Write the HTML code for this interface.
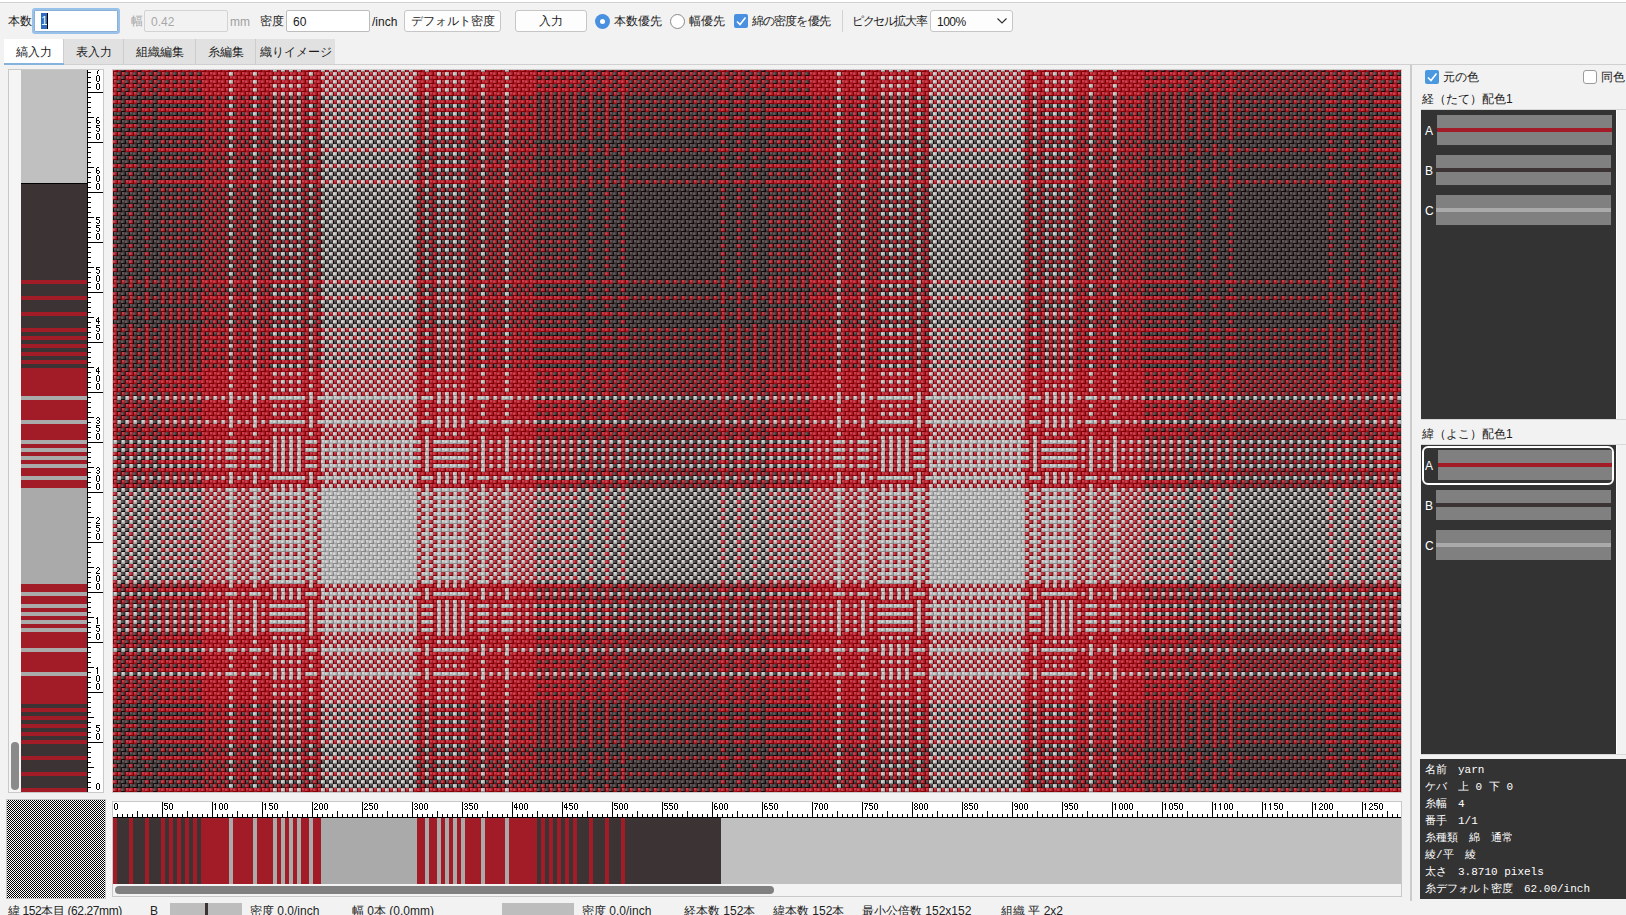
<!DOCTYPE html>
<html><head><meta charset="utf-8">
<style>
*{box-sizing:border-box;margin:0;padding:0}
html,body{width:1626px;height:915px;overflow:hidden;background:#f2f2f2;font-family:"Liberation Sans",sans-serif;font-size:12px;color:#1a1a1a}
.a{position:absolute}
.lbl{position:absolute;font-size:12px;line-height:14px;white-space:nowrap}
.inp{position:absolute;background:#fff;border:1px solid #bdbdbd;border-radius:2px}
.btn{position:absolute;background:#fdfdfd;border:1px solid #c6c6c6;border-radius:3px;text-align:center;font-size:12px;line-height:20px}
.tab{position:absolute;top:39px;height:25px;background:#e1e1e1;border-right:1px solid #cdcdcd;text-align:center;font-size:12px;line-height:27px}
.sw{position:absolute;left:1436px;width:175px;height:30px;background:#808080}
.sw i{position:absolute;left:0;right:0;top:13px;height:4px}
.swl{position:absolute;left:1425px;color:#fff;font-size:12px;line-height:14px}
.info{position:absolute;left:1425px;color:#fff;font-family:"Liberation Mono",monospace;font-size:11px;line-height:17px;white-space:pre}
.st{position:absolute;top:904px;font-size:12px;line-height:14px;white-space:nowrap;color:#222}
</style></head><body>
<!-- top line -->
<div class="a" style="left:0;top:0;width:1626px;height:2px;background:#fff"></div>
<div class="a" style="left:0;top:2px;width:1626px;height:1px;background:#d0d0d0"></div>
<div class="a" style="left:0;top:3px;width:1626px;height:1px;background:#f5f5f5"></div>

<!-- toolbar -->
<div class="lbl" style="left:8px;top:14px">本数</div>
<div class="inp" style="left:32px;top:8px;width:88px;height:26px;border:2px solid #98c2ea;box-shadow:inset 0 0 0 1px #8bb0d8;border-radius:3px"></div>
<div class="a" style="left:41px;top:13px;width:7px;height:16px;background:#2f6cc0"></div>
<div class="lbl" style="left:41px;top:14px;color:#dff;font-size:12px">1</div>
<div class="a" style="left:47px;top:13px;width:1px;height:16px;background:#000"></div>
<div class="lbl" style="left:131px;top:14px;color:#a6a6a6">幅</div>
<div class="inp" style="left:144px;top:10px;width:84px;height:22px;background:#f2f2f2;border-color:#d3d3d3"></div>
<div class="lbl" style="left:151px;top:15px;color:#a8a8a8">0.42</div>
<div class="lbl" style="left:230px;top:15px;color:#a0a0a0">mm</div>
<div class="lbl" style="left:260px;top:14px">密度</div>
<div class="inp" style="left:286px;top:10px;width:84px;height:22px"></div>
<div class="lbl" style="left:293px;top:15px">60</div>
<div class="lbl" style="left:372px;top:15px">/inch</div>
<div class="btn" style="left:404px;top:10px;width:97px;height:22px">デフォルト密度</div>
<div class="btn" style="left:515px;top:10px;width:72px;height:22px">入力</div>
<div class="a" style="left:595px;top:14px;width:15px;height:15px;border-radius:50%;background:#4a90e0"></div>
<div class="a" style="left:600px;top:19px;width:5px;height:5px;border-radius:50%;background:#fff"></div>
<div class="lbl" style="left:614px;top:14px">本数優先</div>
<div class="a" style="left:670px;top:14px;width:15px;height:15px;border-radius:50%;background:#fff;border:1px solid #8a8a8a"></div>
<div class="lbl" style="left:689px;top:14px">幅優先</div>
<div class="a" style="left:734px;top:14px;width:14px;height:14px;border-radius:2px;background:#4a90e0"></div>
<svg class="a" style="left:734px;top:14px" width="14" height="14"><path d="M3 7.5 L6 10.5 L11.5 3.5" stroke="#fff" stroke-width="1.6" fill="none"/></svg>
<div class="lbl" style="left:752px;top:14px;letter-spacing:-0.9px">綿の密度を優先</div>
<div class="a" style="left:842px;top:10px;width:1px;height:22px;background:#d2d2d2"></div>
<div class="lbl" style="left:852px;top:14px;letter-spacing:-1.4px">ピクセル拡大率</div>
<div class="btn" style="left:930px;top:10px;width:83px;height:22px;text-align:left"></div>
<div class="lbl" style="left:937px;top:15px;letter-spacing:-0.5px">100%</div>
<svg class="a" style="left:996px;top:16px" width="12" height="10"><path d="M1.5 2.5 L6 7 L10.5 2.5" stroke="#333" stroke-width="1.2" fill="none"/></svg>

<!-- tabs -->
<div class="tab" style="left:4px;width:60px;background:#fff">縞入力</div>
<div class="a" style="left:4px;top:63px;width:60px;height:2px;background:#86b2de;z-index:2"></div>
<div class="tab" style="left:64px;width:60px">表入力</div>
<div class="tab" style="left:124px;width:72px">組織編集</div>
<div class="tab" style="left:196px;width:60px">糸編集</div>
<div class="tab" style="left:256px;width:79px;border-right:none">織りイメージ</div>
<div class="a" style="left:4px;top:64px;width:1622px;height:1px;background:#d0d0d0"></div>

<!-- left weft panel -->
<div class="a" style="left:8px;top:69px;width:96px;height:724px;border:1px solid #c8c8c8;background:#f5f5f5"></div>
<div class="a" style="left:11px;top:742px;width:8px;height:48px;border-radius:4px;background:#8a8a8a"></div>
<div class="a" style="left:21px;top:70px;width:66px;height:722px;background:linear-gradient(to top,#a21c28 0px 4px,#3c3434 4px 16px,#a21c28 16px 20px,#3c3434 20px 32px,#a21c28 32px 36px,#3c3434 36px 48px,#a21c28 48px 52px,#3c3434 52px 56px,#a21c28 56px 60px,#3c3434 60px 64px,#a21c28 64px 68px,#3c3434 68px 72px,#a21c28 72px 76px,#3c3434 76px 80px,#a21c28 80px 84px,#3c3434 84px 88px,#a21c28 88px 116px,#aaaaaa 116px 120px,#a21c28 120px 140px,#aaaaaa 140px 144px,#a21c28 144px 160px,#aaaaaa 160px 164px,#a21c28 164px 168px,#aaaaaa 168px 172px,#a21c28 172px 176px,#aaaaaa 176px 180px,#a21c28 180px 184px,#aaaaaa 184px 188px,#a21c28 188px 196px,#aaaaaa 196px 200px,#a21c28 200px 208px,#aaaaaa 208px 304px,#a21c28 304px 312px,#aaaaaa 312px 316px,#a21c28 316px 324px,#aaaaaa 324px 328px,#a21c28 328px 332px,#aaaaaa 332px 336px,#a21c28 336px 340px,#aaaaaa 340px 344px,#a21c28 344px 348px,#aaaaaa 348px 352px,#a21c28 352px 368px,#aaaaaa 368px 372px,#a21c28 372px 392px,#aaaaaa 392px 396px,#a21c28 396px 424px,#3c3434 424px 428px,#a21c28 428px 432px,#3c3434 432px 436px,#a21c28 436px 440px,#3c3434 440px 444px,#a21c28 444px 448px,#3c3434 448px 452px,#a21c28 452px 456px,#3c3434 456px 460px,#a21c28 460px 464px,#3c3434 464px 476px,#a21c28 476px 480px,#3c3434 480px 492px,#a21c28 492px 496px,#3c3434 496px 508px,#a21c28 508px 512px,#3c3434 512px 608px) 0 100%/100% 608px no-repeat,#c0c0c0"></div>
<div class="a" style="left:87px;top:70px;width:16px;height:722px;background:#fff;border-left:1px solid #000"></div>
<canvas id="cw" class="a" style="left:21px;top:70px" width="82" height="722"></canvas>

<!-- fabric -->
<div class="a" style="left:112px;top:69px;width:1290px;height:724px;background:#cccccc"></div>
<div class="a" style="left:113px;top:70px;width:1288px;height:722px;background:linear-gradient(to right,rgba(167,26,39,.5) 0px 4px,rgba(60,52,52,.5) 4px 16px,rgba(167,26,39,.5) 16px 20px,rgba(60,52,52,.5) 20px 32px,rgba(167,26,39,.5) 32px 36px,rgba(60,52,52,.5) 36px 48px,rgba(167,26,39,.5) 48px 52px,rgba(60,52,52,.5) 52px 56px,rgba(167,26,39,.5) 56px 60px,rgba(60,52,52,.5) 60px 64px,rgba(167,26,39,.5) 64px 68px,rgba(60,52,52,.5) 68px 72px,rgba(167,26,39,.5) 72px 76px,rgba(60,52,52,.5) 76px 80px,rgba(167,26,39,.5) 80px 84px,rgba(60,52,52,.5) 84px 88px,rgba(167,26,39,.5) 88px 116px,rgba(175,175,175,.5) 116px 120px,rgba(167,26,39,.5) 120px 140px,rgba(175,175,175,.5) 140px 144px,rgba(167,26,39,.5) 144px 160px,rgba(175,175,175,.5) 160px 164px,rgba(167,26,39,.5) 164px 168px,rgba(175,175,175,.5) 168px 172px,rgba(167,26,39,.5) 172px 176px,rgba(175,175,175,.5) 176px 180px,rgba(167,26,39,.5) 180px 184px,rgba(175,175,175,.5) 184px 188px,rgba(167,26,39,.5) 188px 196px,rgba(175,175,175,.5) 196px 200px,rgba(167,26,39,.5) 200px 208px,rgba(175,175,175,.5) 208px 304px,rgba(167,26,39,.5) 304px 312px,rgba(175,175,175,.5) 312px 316px,rgba(167,26,39,.5) 316px 324px,rgba(175,175,175,.5) 324px 328px,rgba(167,26,39,.5) 328px 332px,rgba(175,175,175,.5) 332px 336px,rgba(167,26,39,.5) 336px 340px,rgba(175,175,175,.5) 340px 344px,rgba(167,26,39,.5) 344px 348px,rgba(175,175,175,.5) 348px 352px,rgba(167,26,39,.5) 352px 368px,rgba(175,175,175,.5) 368px 372px,rgba(167,26,39,.5) 372px 392px,rgba(175,175,175,.5) 392px 396px,rgba(167,26,39,.5) 396px 424px,rgba(60,52,52,.5) 424px 428px,rgba(167,26,39,.5) 428px 432px,rgba(60,52,52,.5) 432px 436px,rgba(167,26,39,.5) 436px 440px,rgba(60,52,52,.5) 440px 444px,rgba(167,26,39,.5) 444px 448px,rgba(60,52,52,.5) 448px 452px,rgba(167,26,39,.5) 452px 456px,rgba(60,52,52,.5) 456px 460px,rgba(167,26,39,.5) 460px 464px,rgba(60,52,52,.5) 464px 476px,rgba(167,26,39,.5) 476px 480px,rgba(60,52,52,.5) 480px 492px,rgba(167,26,39,.5) 492px 496px,rgba(60,52,52,.5) 496px 508px,rgba(167,26,39,.5) 508px 512px,rgba(60,52,52,.5) 512px 608px) 0 0/608px 100% repeat-x,linear-gradient(to top,rgb(167,26,39) 0px 4px,rgb(60,52,52) 4px 16px,rgb(167,26,39) 16px 20px,rgb(60,52,52) 20px 32px,rgb(167,26,39) 32px 36px,rgb(60,52,52) 36px 48px,rgb(167,26,39) 48px 52px,rgb(60,52,52) 52px 56px,rgb(167,26,39) 56px 60px,rgb(60,52,52) 60px 64px,rgb(167,26,39) 64px 68px,rgb(60,52,52) 68px 72px,rgb(167,26,39) 72px 76px,rgb(60,52,52) 76px 80px,rgb(167,26,39) 80px 84px,rgb(60,52,52) 84px 88px,rgb(167,26,39) 88px 116px,rgb(175,175,175) 116px 120px,rgb(167,26,39) 120px 140px,rgb(175,175,175) 140px 144px,rgb(167,26,39) 144px 160px,rgb(175,175,175) 160px 164px,rgb(167,26,39) 164px 168px,rgb(175,175,175) 168px 172px,rgb(167,26,39) 172px 176px,rgb(175,175,175) 176px 180px,rgb(167,26,39) 180px 184px,rgb(175,175,175) 184px 188px,rgb(167,26,39) 188px 196px,rgb(175,175,175) 196px 200px,rgb(167,26,39) 200px 208px,rgb(175,175,175) 208px 304px,rgb(167,26,39) 304px 312px,rgb(175,175,175) 312px 316px,rgb(167,26,39) 316px 324px,rgb(175,175,175) 324px 328px,rgb(167,26,39) 328px 332px,rgb(175,175,175) 332px 336px,rgb(167,26,39) 336px 340px,rgb(175,175,175) 340px 344px,rgb(167,26,39) 344px 348px,rgb(175,175,175) 348px 352px,rgb(167,26,39) 352px 368px,rgb(175,175,175) 368px 372px,rgb(167,26,39) 372px 392px,rgb(175,175,175) 392px 396px,rgb(167,26,39) 396px 424px,rgb(60,52,52) 424px 428px,rgb(167,26,39) 428px 432px,rgb(60,52,52) 432px 436px,rgb(167,26,39) 436px 440px,rgb(60,52,52) 440px 444px,rgb(167,26,39) 444px 448px,rgb(60,52,52) 448px 452px,rgb(167,26,39) 452px 456px,rgb(60,52,52) 456px 460px,rgb(167,26,39) 460px 464px,rgb(60,52,52) 464px 476px,rgb(167,26,39) 476px 480px,rgb(60,52,52) 480px 492px,rgb(167,26,39) 492px 496px,rgb(60,52,52) 496px 508px,rgb(167,26,39) 508px 512px,rgb(60,52,52) 512px 608px) 0 100%/100% 608px repeat-y"></div>
<canvas id="cf" class="a" style="left:113px;top:70px" width="1288" height="722"></canvas>

<!-- weave checker -->
<div class="a" style="left:6px;top:799px;width:100px;height:100px;background:#c4c4c4"></div>
<div class="a" style="left:7px;top:800px;width:98px;height:98px;background:repeating-conic-gradient(#fff 0 25%,#000 0 50%) 0 0/2px 2px"></div>
<canvas id="cc" class="a" style="left:7px;top:800px" width="98" height="98"></canvas>

<!-- bottom ruler + warp strip -->
<div class="a" style="left:112px;top:801px;width:1290px;height:96px;border:1px solid #c8c8c8;background:#fff"></div>
<div class="a" style="left:113px;top:818px;width:1288px;height:66px;background:linear-gradient(to right,#a21c28 0px 4px,#3c3434 4px 16px,#a21c28 16px 20px,#3c3434 20px 32px,#a21c28 32px 36px,#3c3434 36px 48px,#a21c28 48px 52px,#3c3434 52px 56px,#a21c28 56px 60px,#3c3434 60px 64px,#a21c28 64px 68px,#3c3434 68px 72px,#a21c28 72px 76px,#3c3434 76px 80px,#a21c28 80px 84px,#3c3434 84px 88px,#a21c28 88px 116px,#aaaaaa 116px 120px,#a21c28 120px 140px,#aaaaaa 140px 144px,#a21c28 144px 160px,#aaaaaa 160px 164px,#a21c28 164px 168px,#aaaaaa 168px 172px,#a21c28 172px 176px,#aaaaaa 176px 180px,#a21c28 180px 184px,#aaaaaa 184px 188px,#a21c28 188px 196px,#aaaaaa 196px 200px,#a21c28 200px 208px,#aaaaaa 208px 304px,#a21c28 304px 312px,#aaaaaa 312px 316px,#a21c28 316px 324px,#aaaaaa 324px 328px,#a21c28 328px 332px,#aaaaaa 332px 336px,#a21c28 336px 340px,#aaaaaa 340px 344px,#a21c28 344px 348px,#aaaaaa 348px 352px,#a21c28 352px 368px,#aaaaaa 368px 372px,#a21c28 372px 392px,#aaaaaa 392px 396px,#a21c28 396px 424px,#3c3434 424px 428px,#a21c28 428px 432px,#3c3434 432px 436px,#a21c28 436px 440px,#3c3434 440px 444px,#a21c28 444px 448px,#3c3434 448px 452px,#a21c28 452px 456px,#3c3434 456px 460px,#a21c28 460px 464px,#3c3434 464px 476px,#a21c28 476px 480px,#3c3434 480px 492px,#a21c28 492px 496px,#3c3434 496px 508px,#a21c28 508px 512px,#3c3434 512px 608px) 0 0/608px 100% no-repeat,#c0c0c0"></div>
<div class="a" style="left:113px;top:817px;width:1288px;height:1px;background:#000"></div>
<canvas id="cr" class="a" style="left:113px;top:802px" width="1288" height="82"></canvas>
<div class="a" style="left:113px;top:884px;width:1288px;height:12px;background:#f3f3f3"></div>
<div class="a" style="left:115px;top:886px;width:659px;height:8px;border-radius:4px;background:#808080"></div>

<!-- status bar -->
<div class="st" style="left:8px;letter-spacing:-0.4px">緯 152本目 (62.27mm)</div>
<div class="st" style="left:150px">B</div>
<div class="a" style="left:170px;top:903px;width:72px;height:12px;background:#bdbdbd"></div>
<div class="a" style="left:205px;top:903px;width:3px;height:12px;background:#3c3434"></div>
<div class="st" style="left:250px">密度 0.0/inch</div>
<div class="st" style="left:352px">幅 0本 (0.0mm)</div>
<div class="a" style="left:502px;top:903px;width:72px;height:12px;background:#bdbdbd"></div>
<div class="st" style="left:582px">密度 0.0/inch</div>
<div class="st" style="left:684px">経本数 152本</div>
<div class="st" style="left:773px">緯本数 152本</div>
<div class="st" style="left:862px">最小公倍数 152x152</div>
<div class="st" style="left:1001px">組織 平 2x2</div>

<!-- right panel -->
<div class="a" style="left:1410px;top:65px;width:2px;height:836px;background:#cccccc"></div>
<div class="a" style="left:1425px;top:70px;width:14px;height:14px;border-radius:2px;background:#4a98e0"></div>
<svg class="a" style="left:1425px;top:70px" width="14" height="14"><path d="M3 7.5 L6 10.5 L11.5 3.5" stroke="#fff" stroke-width="1.6" fill="none"/></svg>
<div class="lbl" style="left:1443px;top:70px">元の色</div>
<div class="a" style="left:1583px;top:70px;width:14px;height:14px;border-radius:3px;background:#fff;border:1px solid #9a9a9a"></div>
<div class="lbl" style="left:1601px;top:70px">同色</div>
<div class="lbl" style="left:1422px;top:92px">経（たて）配色1</div>
<div class="a" style="left:1421px;top:109px;width:205px;height:1px;background:#d8d8d8"></div>
<div class="a" style="left:1421px;top:110px;width:195px;height:309px;background:#333333"></div>
<div class="a" style="left:1616px;top:110px;width:1px;height:309px;background:#fff"></div>
<div class="swl" style="top:124px">A</div>
<div class="sw" style="top:115px;left:1437px"><i style="background:#a21c28"></i></div>
<div class="swl" style="top:164px">B</div>
<div class="sw" style="top:155px"><i style="background:#3c3434"></i></div>
<div class="swl" style="top:204px">C</div>
<div class="sw" style="top:195px"><i style="background:#aaaaaa"></i></div>
<div class="a" style="left:1421px;top:419px;width:205px;height:1px;background:#d8d8d8"></div>
<div class="lbl" style="left:1422px;top:427px">緯（よこ）配色1</div>
<div class="a" style="left:1421px;top:444px;width:205px;height:1px;background:#d8d8d8"></div>
<div class="a" style="left:1421px;top:445px;width:195px;height:309px;background:#333333"></div>
<div class="a" style="left:1616px;top:445px;width:1px;height:309px;background:#fff"></div>
<div class="a" style="left:1422px;top:446px;width:192px;height:39px;border:2px solid #fff;border-radius:6px"></div>
<div class="swl" style="top:459px">A</div>
<div class="sw" style="top:450px;left:1438px;width:174px"><i style="background:#a21c28"></i></div>
<div class="swl" style="top:499px">B</div>
<div class="sw" style="top:490px"><i style="background:#3c3434"></i></div>
<div class="swl" style="top:539px">C</div>
<div class="sw" style="top:530px"><i style="background:#aaaaaa"></i></div>
<div class="a" style="left:1421px;top:754px;width:205px;height:1px;background:#d8d8d8"></div>
<div class="a" style="left:1420px;top:759px;width:206px;height:140px;background:#333333"></div>
<div class="info" style="top:762px">名前　yarn
ケバ　上 0 下 0
糸幅　4
番手　1/1
糸種類　綿　通常
綾/平　綾
太さ　3.8710 pixels
糸デフォルト密度　62.00/inch</div>

<script>
(function(){
var FNT={'0':['.##.','#..#','#..#','#..#','#..#','#..#','.##.'],
'1':['.#..','##..','.#..','.#..','.#..','.#..','.#..'],
'2':['.##.','#..#','...#','..#.','.#..','#...','####'],
'3':['.##.','#..#','...#','.##.','...#','#..#','.##.'],
'4':['..#.','.##.','#.#.','#.#.','####','..#.','..#.'],
'5':['####','#...','###.','...#','...#','#..#','.##.'],
'6':['.##.','#...','#...','###.','#..#','#..#','.##.'],
'7':['####','...#','..#.','..#.','.#..','.#..','.#..'],
'8':['.##.','#..#','#..#','.##.','#..#','#..#','.##.'],
'9':['.##.','#..#','#..#','.###','...#','...#','.##.']};
function dg(ctx,ch,X,Y){var f=FNT[ch];ctx.fillStyle='#000';for(var i=0;i<7;i++)for(var j=0;j<4;j++)if(f[i][j]=='#')ctx.fillRect(X+j,Y+i,1,1);}
var A='RDDDRDDDRDDDRDRDRDRDRDRRRRRRRGRRRRRGRRRRGRGRGRGRRGRR';
var S=A+'G'.repeat(24)+A.split('').reverse().join('')+'D'.repeat(24);
var BASE={R:[162,28,40],D:[60,52,52],G:[170,170,170]};
var STRIP={R:'#a21c28',D:'#3c3434',G:'#aaaaaa'};
// fabric
var cf=document.getElementById('cf'),x=cf.getContext('2d');
var W=1288,H=722,img=x.createImageData(W,H),d=img.data;
// kernels: additive offsets
var KW=[ // warp up
 [  8, 12,  2,-12],
 [ 28, 30,  8,-12],
 [ 24, 26,  2,-15],
 [-42,-50,-50,-50]];
var KF=[ // weft up
 [-42, 30, 26, -2],
 [-50, 27, 22, -5],
 [-50,  2,  2,-12],
 [-50,-16,-16,-22]];
for(var py=0;py<H;py++){
  var Y=py+70,r=Math.floor(Y/4),ry=Y-4*r;
  var wk=S[((197-r)%152+152)%152];
  for(var px=0;px<W;px++){
    var c=Math.floor(px/4),rx=px-4*c;
    var up=((c+r)&1), col, ad;
    if(up){col=BASE[S[c%152]];ad=KW[ry][rx];}
    else{col=BASE[wk];ad=KF[ry][rx];}
    var o=(py*W+px)*4;
    d[o]=col[0]*1.05+6+ad;d[o+1]=col[1]*1.05+6+ad;d[o+2]=col[2]*1.05+6+ad;d[o+3]=255;
  }
}
x.putImageData(img,0,0);
// weft strip + left ruler
var cw=document.getElementById('cw'),w=cw.getContext('2d');
w.fillStyle='#c0c0c0';w.fillRect(0,0,66,722);
for(var k=0;k<152;k++){w.fillStyle=STRIP[S[k]];w.fillRect(0,722-4*(k+1),66,4);}
w.fillStyle='#000';w.fillRect(0,113,66,1);
w.fillStyle='#fff';w.fillRect(66,0,16,722);
w.fillStyle='#000';w.fillRect(66,0,1,722);
for(var u=0;u<=722;u+=5){var yy=722-u;var L=(u%50==0)?16:((u%25==0)?6:3);w.fillRect(67,yy,L,1);}
for(var u=0;u<=700;u+=50){var st=String(u);var yy=722-u;for(var q=0;q<st.length;q++){dg(w,st[q],75,yy-2-8*(st.length-q)+1);}}
// bottom ruler + warp strip
var cr=document.getElementById('cr'),g=cr.getContext('2d');
g.fillStyle='#fff';g.fillRect(0,0,1288,16);
g.fillStyle='#000';g.fillRect(0,15,1288,1);
for(var u=0;u<=1288;u+=5){var xx=u-1;var L=(u%50==0)?16:((u%25==0)?6:3);g.fillRect(xx,15-L,1,L);}
for(var u=0;u<=1250;u+=50){var st=String(u);for(var q=0;q<st.length;q++){dg(g,st[q],u+1+5*q,1);}}
g.fillStyle='#c0c0c0';g.fillRect(0,16,1288,66);
for(var k=0;k<152;k++){g.fillStyle=STRIP[S[k]];g.fillRect(4*k,16,4,66);}
// checker
var cc=document.getElementById('cc'),h=cc.getContext('2d'),im=h.createImageData(98,98),dd=im.data;
for(var yy=0;yy<98;yy++)for(var xx=0;xx<98;xx++){var v=((xx+yy)&1)?0:255;var o=(yy*98+xx)*4;dd[o]=dd[o+1]=dd[o+2]=v;dd[o+3]=255;}
h.putImageData(im,0,0);
})();
</script>
</body></html>
